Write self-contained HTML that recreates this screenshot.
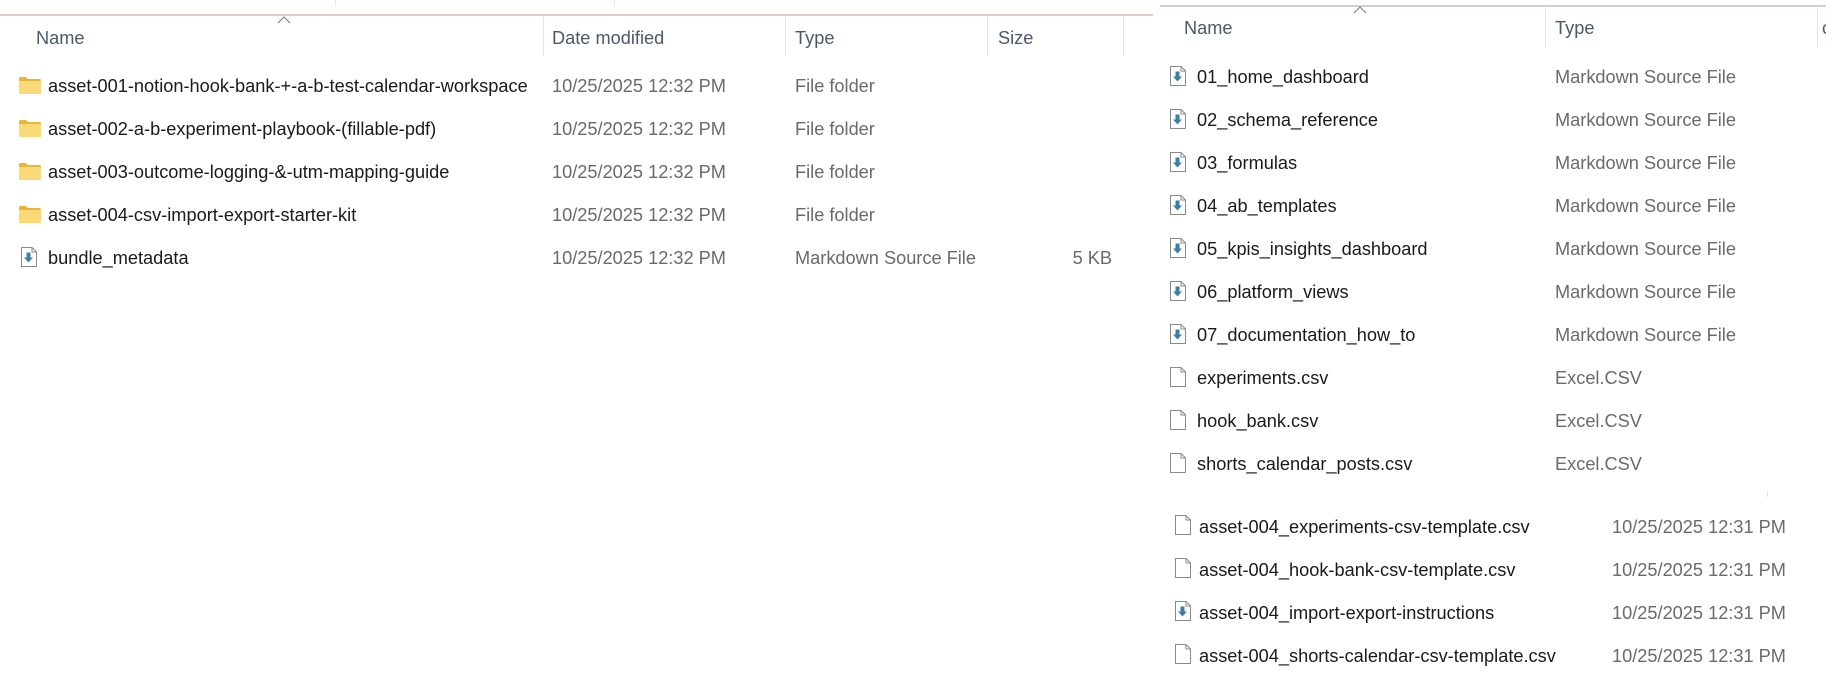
<!DOCTYPE html>
<html><head><meta charset="utf-8"><style>
*{margin:0;padding:0;box-sizing:border-box}
body{width:1826px;height:687px;background:#fff;position:relative;overflow:hidden;font-family:"Liberation Sans",sans-serif;font-size:18.2px;color:#1a1a1a}
.a{position:absolute;white-space:nowrap}
.t{transform:translateY(-48%)}
.h{color:#4a5868}
.g{color:#6a6a6a}
.vl{position:absolute;width:1px;background:#e6e6e6}
.line{position:absolute;height:2px;background:#dcccc4}
.car{position:absolute;width:14px;height:8px}
</style></head><body>
<svg width="0" height="0" style="position:absolute">
<defs>
<symbol id="fold" viewBox="0 0 22 17"><path d="M0 1.5Q0 0 1.5 0H7l2 2h11.5Q22 2 22 3.5V16Q22 17 21 17H1Q0 17 0 16Z" fill="#e9b53c"/><path d="M0 4H22V16Q22 17 21 17H1Q0 17 0 16Z" fill="#fbd977"/></symbol>
<symbol id="md" viewBox="0 0 16 20"><path d="M.5.5H11L15.5 5V19.5H.5Z" fill="#fff" stroke="#8a8a8a"/><path d="M11 .5V5H15.5" fill="none" stroke="#8a8a8a"/><path d="M5.5 5.5h4v5h2.5L7.5 15.5 3 10.5H5.5Z" fill="#3b7fa8"/></symbol>
<symbol id="csv" viewBox="0 0 16 20"><path d="M.5.5H11L15.5 5V19.5H.5Z" fill="#fff" stroke="#8a8a8a"/><path d="M11 .5V5H15.5" fill="none" stroke="#8a8a8a"/></symbol>
</defs></svg>

<!-- left pane -->
<div class="line" style="left:0;top:14px;width:1153px"></div>
<div class="vl" style="left:335px;top:0;height:6px"></div>
<div class="vl" style="left:614px;top:0;height:6px"></div>
<svg class="car" style="left:277px;top:16px"><path d="M1 7L7 1L13 7" fill="none" stroke="#777" stroke-width="1"/></svg>
<div class="vl" style="left:543px;top:16px;height:40px"></div>
<div class="vl" style="left:785px;top:16px;height:40px"></div>
<div class="vl" style="left:987px;top:16px;height:40px"></div>
<div class="vl" style="left:1123px;top:16px;height:40px"></div>
<div class="a t h" style="left:36px;top:38px">Name</div>
<div class="a t h" style="left:552px;top:38px">Date modified</div>
<div class="a t h" style="left:795px;top:38px">Type</div>
<div class="a t h" style="left:998px;top:38px">Size</div>

<svg class="a" style="left:19px;top:77px" width="22" height="17"><use href="#fold"/></svg>
<div class="a t" style="left:48px;top:86px">asset-001-notion-hook-bank-+-a-b-test-calendar-workspace</div>
<svg class="a" style="left:19px;top:120px" width="22" height="17"><use href="#fold"/></svg>
<div class="a t" style="left:48px;top:129px">asset-002-a-b-experiment-playbook-(fillable-pdf)</div>
<svg class="a" style="left:19px;top:163px" width="22" height="17"><use href="#fold"/></svg>
<div class="a t" style="left:48px;top:172px">asset-003-outcome-logging-&amp;-utm-mapping-guide</div>
<svg class="a" style="left:19px;top:206px" width="22" height="17"><use href="#fold"/></svg>
<div class="a t" style="left:48px;top:215px">asset-004-csv-import-export-starter-kit</div>
<svg class="a" style="left:21px;top:247px" width="16" height="20"><use href="#md"/></svg>
<div class="a t" style="left:48px;top:258px">bundle_metadata</div>
<div class="a t g" style="left:552px;top:86px">10/25/2025 12:32 PM</div>
<div class="a t g" style="left:552px;top:129px">10/25/2025 12:32 PM</div>
<div class="a t g" style="left:552px;top:172px">10/25/2025 12:32 PM</div>
<div class="a t g" style="left:552px;top:215px">10/25/2025 12:32 PM</div>
<div class="a t g" style="left:552px;top:258px">10/25/2025 12:32 PM</div>
<div class="a t g" style="left:795px;top:86px">File folder</div>
<div class="a t g" style="left:795px;top:129px">File folder</div>
<div class="a t g" style="left:795px;top:172px">File folder</div>
<div class="a t g" style="left:795px;top:215px">File folder</div>
<div class="a t g" style="left:795px;top:258px">Markdown Source File</div>
<div class="a t g" style="right:714px;top:258px">5 KB</div>

<!-- right pane -->
<div class="line" style="left:1160px;top:5px;width:666px"></div>
<svg class="car" style="left:1353px;top:6px"><path d="M1 7L7 1L13 7" fill="none" stroke="#777" stroke-width="1"/></svg>
<div class="vl" style="left:1545px;top:7px;height:40px"></div>
<div class="vl" style="left:1817px;top:7px;height:40px"></div>
<div class="a t h" style="left:1184px;top:28px">Name</div>
<div class="a t h" style="left:1555px;top:28px">Type</div>
<div class="a t h" style="left:1822px;top:28px">c</div>

<svg class="a" style="left:1170px;top:66px" width="16" height="20"><use href="#md"/></svg>
<div class="a t" style="left:1197px;top:77px">01_home_dashboard</div>
<svg class="a" style="left:1170px;top:109px" width="16" height="20"><use href="#md"/></svg>
<div class="a t" style="left:1197px;top:120px">02_schema_reference</div>
<svg class="a" style="left:1170px;top:152px" width="16" height="20"><use href="#md"/></svg>
<div class="a t" style="left:1197px;top:163px">03_formulas</div>
<svg class="a" style="left:1170px;top:195px" width="16" height="20"><use href="#md"/></svg>
<div class="a t" style="left:1197px;top:206px">04_ab_templates</div>
<svg class="a" style="left:1170px;top:238px" width="16" height="20"><use href="#md"/></svg>
<div class="a t" style="left:1197px;top:249px">05_kpis_insights_dashboard</div>
<svg class="a" style="left:1170px;top:281px" width="16" height="20"><use href="#md"/></svg>
<div class="a t" style="left:1197px;top:292px">06_platform_views</div>
<svg class="a" style="left:1170px;top:324px" width="16" height="20"><use href="#md"/></svg>
<div class="a t" style="left:1197px;top:335px">07_documentation_how_to</div>
<svg class="a" style="left:1170px;top:367px" width="16" height="20"><use href="#csv"/></svg>
<div class="a t" style="left:1197px;top:378px">experiments.csv</div>
<svg class="a" style="left:1170px;top:410px" width="16" height="20"><use href="#csv"/></svg>
<div class="a t" style="left:1197px;top:421px">hook_bank.csv</div>
<svg class="a" style="left:1170px;top:453px" width="16" height="20"><use href="#csv"/></svg>
<div class="a t" style="left:1197px;top:464px">shorts_calendar_posts.csv</div>

<div class="a t g" style="left:1555px;top:77px">Markdown Source File</div>
<div class="a t g" style="left:1555px;top:120px">Markdown Source File</div>
<div class="a t g" style="left:1555px;top:163px">Markdown Source File</div>
<div class="a t g" style="left:1555px;top:206px">Markdown Source File</div>
<div class="a t g" style="left:1555px;top:249px">Markdown Source File</div>
<div class="a t g" style="left:1555px;top:292px">Markdown Source File</div>
<div class="a t g" style="left:1555px;top:335px">Markdown Source File</div>
<div class="a t g" style="left:1555px;top:378px">Excel.CSV</div>
<div class="a t g" style="left:1555px;top:421px">Excel.CSV</div>
<div class="a t g" style="left:1555px;top:464px">Excel.CSV</div>

<div class="vl" style="left:1767px;top:491px;height:6px"></div>

<svg class="a" style="left:1175px;top:515px" width="16" height="20"><use href="#csv"/></svg>
<div class="a t" style="left:1199px;top:527px">asset-004_experiments-csv-template.csv</div>
<svg class="a" style="left:1175px;top:558px" width="16" height="20"><use href="#csv"/></svg>
<div class="a t" style="left:1199px;top:570px">asset-004_hook-bank-csv-template.csv</div>
<svg class="a" style="left:1175px;top:601px" width="16" height="20"><use href="#md"/></svg>
<div class="a t" style="left:1199px;top:613px">asset-004_import-export-instructions</div>
<svg class="a" style="left:1175px;top:644px" width="16" height="20"><use href="#csv"/></svg>
<div class="a t" style="left:1199px;top:656px">asset-004_shorts-calendar-csv-template.csv</div>
<div class="a t g" style="left:1612px;top:527px">10/25/2025 12:31 PM</div>
<div class="a t g" style="left:1612px;top:570px">10/25/2025 12:31 PM</div>
<div class="a t g" style="left:1612px;top:613px">10/25/2025 12:31 PM</div>
<div class="a t g" style="left:1612px;top:656px">10/25/2025 12:31 PM</div>
</body></html>
